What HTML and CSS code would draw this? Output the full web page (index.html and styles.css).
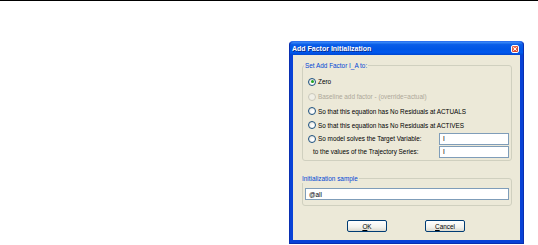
FILE: index.html
```html
<!DOCTYPE html>
<html>
<head>
<meta charset="utf-8">
<link rel="stylesheet" href="styles.css">
</head>
<body>
<div class="rule"></div>
<div class="stage">
  <div class="dialog">
    <div class="titlebar">
      <span class="title">Add Factor Initialization</span>
      <span class="close"><svg width="8" height="8" viewBox="0 0 8 8"><path d="M2 2L6 6M6 2L2 6" stroke="#fff" stroke-width="1.3" stroke-linecap="round"/></svg></span>
    </div>
    <div class="body">
      <fieldset class="group g1">
        <legend>Set Add Factor I_A to:</legend>
        <div class="opt first"><span class="radio checked"></span><span>Zero</span></div>
        <div class="opt disabled"><span class="radio"></span><span>Baseline add factor - (override=actual)</span></div>
        <div class="opt"><span class="radio"></span><span>So that this equation has No Residuals at ACTUALS</span></div>
        <div class="opt tall"><span class="radio"></span><span>So that this equation has No Residuals at ACTIVES</span></div>
        <div class="opt field"><span class="radio"></span><span class="lbl">So model solves the Target Variable:</span><span class="input small">I</span></div>
        <div class="opt field sub"><span class="lbl">to the values of the Trajectory Series:</span><span class="input small">I</span></div>
      </fieldset>
      <fieldset class="group g2">
        <legend>Initialization sample</legend>
        <div class="input wide">@all</div>
      </fieldset>
      <div class="buttons">
        <button class="btn"><u>O</u>K</button>
        <button class="btn"><u>C</u>ancel</button>
      </div>
    </div>
  </div>
</div>
</body>
</html>
```

FILE: styles.css
```css
html, body {
  margin: 0;
  padding: 0;
  background: #fff;
}
body {
  width: 538px;
  height: 245px;
  overflow: hidden;
  font-family: "Liberation Sans", Arial, sans-serif;
}
.rule {
  height: 1px;
  background: #000;
}
.stage {
  padding-left: 289px;
  padding-top: 40px;
}
.dialog {
  width: 235px;
  height: 203px;
  box-sizing: border-box;
  background: #0842d6;
  border-radius: 4px 4px 0 0;
  padding: 0 3px 3px 3px;
  display: flex;
  flex-direction: column;
  border: 1px solid #0a2fb0;
  border-top-color: #2b70f0;
}
.titlebar {
  height: 13px;
  margin: 0 -3px;
  padding: 0 4px 0 2px;
  display: flex;
  align-items: center;
  justify-content: space-between;
  background: linear-gradient(to bottom, #3d8cf7 0%, #0a5de8 20%, #0055e5 55%, #0058ee 80%, #0047d0 100%);
  border-radius: 4px 4px 0 0;
}
.title {
  color: #fff;
  font-weight: bold;
  font-size: 7px;
  text-shadow: 1px 1px 0 #0a2a8a;
}
.close {
  width: 8px;
  height: 8px;
  box-sizing: border-box;
  border: 1px solid #fff;
  border-radius: 2px;
  background: radial-gradient(circle at 40% 35%, #f08a6a, #d8432a 70%);
  display: flex;
  align-items: center;
  justify-content: center;
}
.close svg {
  width: 6px;
  height: 6px;
}
.body {
  flex: 1;
  background: #ece9d8;
  padding: 6px 8px 0 9px;
  display: flex;
  flex-direction: column;
}
.group {
  margin: 0;
  padding: 0 0 0 5px;
  border: 1px solid #d0d0bf;
  border-radius: 3px;
  min-width: 0;
}
.group legend {
  padding: 0 1px;
  margin-left: -4px;
  font-size: 6.4px;
  color: #0046d5;
  line-height: 9px;
}
.g1 {
  height: 100px;
  box-sizing: border-box;
}
.opt {
  display: flex;
  align-items: center;
  height: 14px;
  font-size: 6.4px;
  color: #000;
}
.opt.first {
  margin-top: 4px;
  height: 15px;
}
.opt.disabled {
  color: #aca899;
  height: 15px;
}
.opt.tall {
  height: 14px;
}
.radio {
  width: 6px;
  height: 6px;
  border-radius: 50%;
  border: 1px solid #1c5180;
  background: radial-gradient(circle at 65% 65%, #fff 20%, #e4e3dc 80%);
  margin-right: 2px;
  flex: none;
  display: flex;
  align-items: center;
  justify-content: center;
}
.radio.checked::after {
  content: "";
  width: 3px;
  height: 3px;
  border-radius: 50%;
  background: #21a121;
}
.disabled .radio {
  border-color: #cac8bb;
  background: #f0efe6;
}
.field {
  height: 13px;
}
.field .lbl {
  width: 121px;
}
.sub {
  padding-left: 5px;
}
.sub .lbl {
  width: 126px;
}
.input {
  box-sizing: border-box;
  background: #fff;
  border: 1px solid #7f9db9;
  font-size: 6.4px;
  padding-left: 3px;
  display: flex;
  align-items: center;
  color: #000;
}
.input.small {
  width: 70px;
  height: 12px;
}
.g2 {
  margin-top: 13px;
  height: 32px;
  box-sizing: border-box;
  padding-left: 2px;
}
.input.wide {
  margin-top: 5px;
  height: 12px;
  width: 204px;
}
.buttons {
  display: flex;
  justify-content: center;
  gap: 38px;
  margin-top: 14px;
  padding-right: 2px;
}
.btn {
  width: 40px;
  height: 12px;
  box-sizing: border-box;
  border: 1px solid #003c74;
  border-radius: 2px;
  background: linear-gradient(to bottom, #ffffff 0%, #f3f3ee 60%, #dcdad0 100%);
  font-family: "Liberation Sans", Arial, sans-serif;
  font-size: 6.4px;
  padding: 0;
  color: #000;
}
```
